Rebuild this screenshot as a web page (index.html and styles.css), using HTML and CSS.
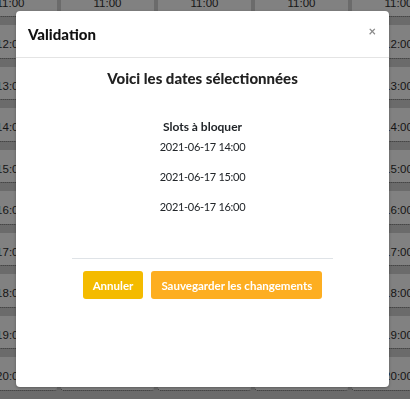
FILE: index.html
```html
<!DOCTYPE html>
<html lang="fr">
<head>
    <meta charset="UTF-8">
    <meta name="viewport" content="width=device-width, initial-scale=1.0">
    <title>Validation</title>
<link rel="stylesheet" href="styles.css">
</head>
<body>
    <div class="calendar" id="calendar"></div>

    <div class="overlay">
        <div class="modalBox">
            <div class="modalHeader">
                <h5 class="modalTitle">Validation</h5>
                <span class="closeBtn">&times;</span>
            </div>
            <div class="modalBody">
                <h4 class="bodyTitle">Voici les dates sélectionnées</h4>
                <p class="slotsLabel">Slots à bloquer</p>
                <p class="slotDate">2021-06-17 14:00</p>
                <p class="slotDate">2021-06-17 15:00</p>
                <p class="slotDate">2021-06-17 16:00</p>
                <hr class="bodyLine">
                <div class="buttonRow">
                    <button class="btnCancel">Annuler</button>
                    <button class="btnSave">Sauvegarder les changements</button>
                </div>
            </div>
        </div>
    </div>

    <script>
        // Build the calendar columns behind the modal
        var calendar = document.getElementById('calendar');
        for (var d = 0; d < 5; d++) {
            var col = document.createElement('div');
            col.className = 'dayColumn';
            for (var h = 11; h <= 20; h++) {
                var cell = document.createElement('div');
                cell.className = 'hourCell';
                cell.textContent = h + ':00';
                col.appendChild(cell);
            }
            calendar.appendChild(col);
        }
    </script>
</body>
</html>
```

FILE: styles.css
```css
/* CSS for styling */
body {
  font-family: "Lato", "Noto Sans", sans-serif;
  margin: 0;
  padding: 0;
  background-color: #6b6b6b;
  overflow: hidden;
  height: 399px;
}

.calendar {
  display: flex;
  gap: 4px;
  margin-left: -36px;
  margin-top: -16.5px;
}

.dayColumn {
  width: 93px;
  flex: none;
}

.hourCell {
  height: 32.5px;
  margin-bottom: 8px;
  background-color: #818181;
  border-bottom: 1px dotted #1e1e1e;
  border-radius: 0 0 3px 3px;
  font-family: "Liberation Sans", sans-serif;
  font-size: 11.5px;
  color: #151515;
  text-align: center;
  line-height: 38px;
}

.overlay {
  position: fixed;
  top: 0;
  left: 0;
  width: 100%;
  height: 100%;
}

.modalBox {
  position: absolute;
  left: 16px;
  top: 11px;
  width: 373px;
  height: 376px;
  background-color: #fff;
  border-radius: 4px;
  box-shadow: 0 1px 3px rgba(0, 0, 0, 0.3);
  color: #212529;
}

.modalHeader {
  display: flex;
  justify-content: space-between;
  align-items: flex-start;
  padding: 12px 13px 12px 12px;
  border-bottom: 1px solid #e4e4e4;
}

.modalTitle {
  margin: 0;
  font-size: 15px;
  font-weight: 900;
  line-height: 22px;
  color: #111;
}

.closeBtn {
  font-size: 13px;
  font-weight: 700;
  line-height: 13px;
  color: #8a8a8a;
  margin-top: 2px;
}

.modalBody {
  padding-top: 8px;
  text-align: center;
}

.bodyTitle {
  margin: 0;
  font-size: 15px;
  font-weight: 900;
  line-height: 24px;
  color: #222;
}

.slotsLabel {
  margin: 27px 0 0;
  font-size: 12px;
  font-weight: 700;
  line-height: 20px;
}

.slotDate {
  margin: 0 0 10px;
  font-size: 11px;
  letter-spacing: -0.3px;
  line-height: 20px;
}

.bodyLine {
  width: 70%;
  margin: 41px auto 12px;
  border: none;
  border-top: 1px solid #dfe3e7;
}

.buttonRow {
  display: flex;
  justify-content: center;
  gap: 8px;
}

.btnCancel,
.btnSave {
  height: 28px;
  border: none;
  border-radius: 3px;
  color: #fff;
  font-family: "Lato", "Noto Sans", sans-serif;
  font-size: 11.5px;
  font-weight: 700;
  padding: 0 10px;
  cursor: pointer;
}

.btnCancel {
  background-color: #f4bb00;
}

.btnSave {
  background-color: #fdae21;
}
```
